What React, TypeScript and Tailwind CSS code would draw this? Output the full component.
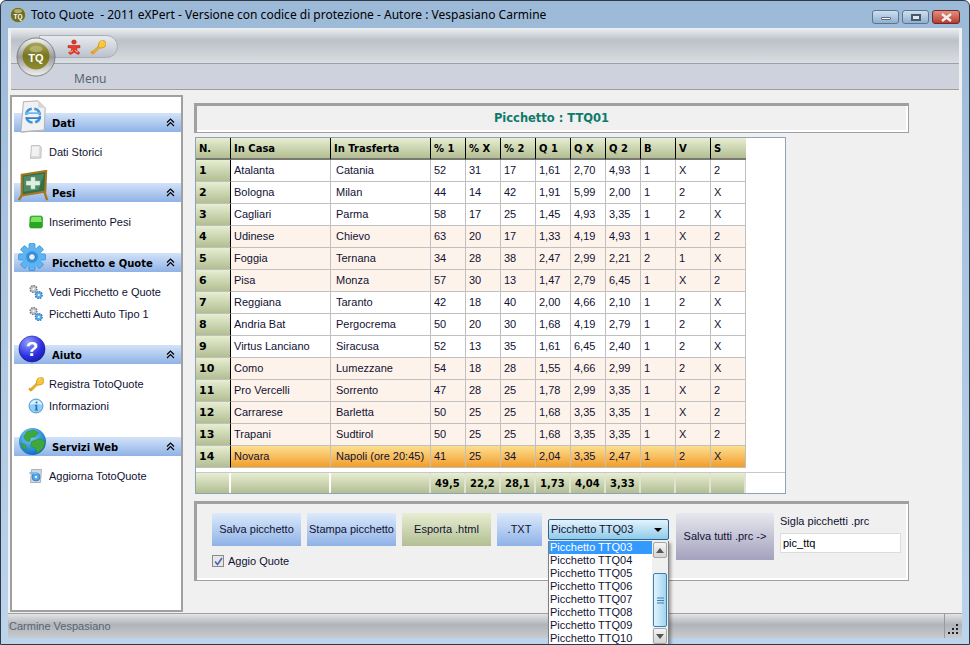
import React from "react";

const BODY = "font-['Liberation_Sans',sans-serif]";
const WIDE = "font-['DejaVu_Sans',sans-serif]";

type Row = string[];

const rows: Row[] = [
  ["1", "Atalanta", "Catania", "52", "31", "17", "1,61", "2,70", "4,93", "1", "X", "2"],
  ["2", "Bologna", "Milan", "44", "14", "42", "1,91", "5,99", "2,00", "1", "2", "X"],
  ["3", "Cagliari", "Parma", "58", "17", "25", "1,45", "4,93", "3,35", "1", "2", "X"],
  ["4", "Udinese", "Chievo", "63", "20", "17", "1,33", "4,19", "4,93", "1", "X", "2"],
  ["5", "Foggia", "Ternana", "34", "28", "38", "2,47", "2,99", "2,21", "2", "1", "X"],
  ["6", "Pisa", "Monza", "57", "30", "13", "1,47", "2,79", "6,45", "1", "X", "2"],
  ["7", "Reggiana", "Taranto", "42", "18", "40", "2,00", "4,66", "2,10", "1", "2", "X"],
  ["8", "Andria Bat", "Pergocrema", "50", "20", "30", "1,68", "4,19", "2,79", "1", "2", "X"],
  ["9", "Virtus Lanciano", "Siracusa", "52", "13", "35", "1,61", "6,45", "2,40", "1", "2", "X"],
  ["10", "Como", "Lumezzane", "54", "18", "28", "1,55", "4,66", "2,99", "1", "2", "X"],
  ["11", "Pro Vercelli", "Sorrento", "47", "28", "25", "1,78", "2,99", "3,35", "1", "X", "2"],
  ["12", "Carrarese", "Barletta", "50", "25", "25", "1,68", "3,35", "3,35", "1", "X", "2"],
  ["13", "Trapani", "Sudtirol", "50", "25", "25", "1,68", "3,35", "3,35", "1", "X", "2"],
  ["14", "Novara", "Napoli (ore 20:45)", "41", "25", "34", "2,04", "3,35", "2,47", "1", "2", "X"],
];

const headers = ["N.", "In Casa", "In Trasferta", "% 1", "% X", "% 2", "Q 1", "Q X", "Q 2", "B", "V", "S"];
const totals = ["", "", "", "49,5", "22,2", "28,1", "1,73", "4,04", "3,33", "", "", ""];
const peach = [4, 5, 6, 10, 11, 12, 13];
const options = ["03", "04", "05", "06", "07", "08", "09", "10"];

const GRID = "grid grid-cols-[35px_100px_100px_repeat(9,35px)]";
const GREEN = "bg-gradient-to-b from-[#e8eed2] to-[#b2be92]";
const BLUE_BTN = "bg-gradient-to-b from-[#dceafb] to-[#8fb2e6]";

function LogoBig() {
  return (
    <svg width={40} height={40} viewBox="0 0 40 40">
      <defs>
        <linearGradient id="ring" x1="0" y1="0" x2="0" y2="1">
          <stop offset="0" stopColor="#f4f4f4" />
          <stop offset="0.5" stopColor="#9a9a9a" />
          <stop offset="1" stopColor="#f2f2f2" />
        </linearGradient>
        <linearGradient id="olive" x1="0" y1="0" x2="0" y2="1">
          <stop offset="0" stopColor="#a9a75a" />
          <stop offset="0.5" stopColor="#77751f" />
          <stop offset="1" stopColor="#8f8c2f" />
        </linearGradient>
      </defs>
      <circle cx="20" cy="20" r="19" fill="url(#ring)" stroke="#6c6c6c" strokeWidth="0.8" />
      <circle cx="20" cy="19" r="13.500" fill="url(#olive)" />
      <ellipse cx="20" cy="12" rx="6.500" ry="3.200" fill="#c9c88f" opacity="0.6" />
      <text x="20" y="25" textAnchor="middle" fontSize="11" fontWeight="700" fill="#fff" fontFamily="'Liberation Sans', sans-serif">
        TQ
      </text>
    </svg>
  );
}

function LogoSmall() {
  return (
    <svg width={16} height={16} viewBox="0 0 16 16">
      <circle cx="8" cy="8" r="7.600" fill="#6f6d22" stroke="#c8c8a8" strokeWidth="0.600" />
      <ellipse cx="8" cy="4" rx="4" ry="2" fill="#b0ae70" />
      <text x="8" y="11.500" textAnchor="middle" fontSize="6.500" fontWeight="700" fill="#fff" fontFamily="'Liberation Sans', sans-serif">
        TQ
      </text>
    </svg>
  );
}

function KeyIcon() {
  return (
    <svg width={16} height={16} viewBox="0 0 16 16">
      <path d="M1.500 13.500L9 6.500l1.500 1.500-7 7z" fill="#f0b020" stroke="#c08410" strokeWidth="0.500" />
      <path d="M1.500 11.500l2.500 2.500-1.500 1.500-2-2z" fill="#e49c18" />
      <path d="M8.500 5a4 3.500-40 1 1 3 4l-1.500.3L8.300 7.500z" fill="#f7c63c" stroke="#c08410" strokeWidth="0.600" />
      <path d="M10.500 3.500l2-1" stroke="#fde9a0" strokeWidth="1" />
    </svg>
  );
}

function Runner() {
  return (
    <svg width={16} height={16} viewBox="0 0 16 16">
      <rect x="5.800" y="1" width="4.400" height="4" rx="1.800" fill="#e53327" stroke="#a81a12" strokeWidth="0.500" />
      <path d="M2 6.500h12v2.200l-3.200.3v2l3 3-1.500 1.500-4-2.200-4 2.200-1.800-1.500 3-3v-2L2 8.700z" fill="#ec3b2e" stroke="#a81a12" strokeWidth="0.500" />
      <path d="M4 13l3-1.500M9 11.500l3 1.500" stroke="#f7b8a0" strokeWidth="1" />
    </svg>
  );
}

function PageSmall() {
  return (
    <svg width={16} height={16} viewBox="0 0 16 16">
      <path d="M3.500 1.500h8l1.800 2-.4 10.500-10.400.5z" fill="#dcdcdc" stroke="#b8b8b8" strokeWidth="0.800" />
      <path d="M4 2.500h7l-.3 9.500H3.500z" fill="#f2f2f2" />
    </svg>
  );
}

function GreenBlock() {
  return (
    <svg width={16} height={16} viewBox="0 0 16 16">
      <path d="M2 4.500a2 2 0 0 1 2-2.500h8.500a2 2 0 0 1 2 2v8.500a2 2 0 0 1-2 1.500H3.500a2 2 0 0 1-2-2z" fill="#28a821" stroke="#2a8a22" strokeWidth="0.600" />
      <path d="M3.500 2.800h9.500l.8 5.200H2.500z" fill="#7ce35f" />
    </svg>
  );
}

function Gears() {
  return (
    <svg width={16} height={16} viewBox="0 0 16 16">
      <circle cx="5.500" cy="5" r="3.400" fill="#c2c6cc" stroke="#777" strokeWidth="1.400" strokeDasharray="1.600 1" />
      <circle cx="5.500" cy="5" r="1" fill="#fff" />
      <circle cx="10.800" cy="11" r="3.400" fill="#63b0ea" stroke="#2b7cc4" strokeWidth="1.400" strokeDasharray="1.600 1" />
      <circle cx="10.800" cy="11" r="1" fill="#fff" />
    </svg>
  );
}

function InfoIcon() {
  return (
    <svg width={16} height={16} viewBox="0 0 16 16">
      <circle cx="8" cy="8" r="7" fill="#8fcdf5" stroke="#3e8cc9" strokeWidth="0.800" />
      <path d="M2 7a6 5 0 0 1 12 0c-3-1.500-9-1.500-12 0z" fill="#d8effc" />
      <circle cx="8.500" cy="4.500" r="1" fill="#1f6fb0" />
      <path d="M7 7h2.200v4.500H10v1H6.800v-1h.8V8H7z" fill="#1f6fb0" />
    </svg>
  );
}

function UpdateIcon() {
  return (
    <svg width={16} height={16} viewBox="0 0 16 16">
      <path d="M3.500 1.500h10l-1 13h-10z" fill="#cfd8e2" stroke="#8f9aa6" strokeWidth="0.700" />
      <circle cx="8" cy="9" r="4" fill="#55a5e6" stroke="#2773b6" strokeWidth="0.700" />
      <path d="M1.500 4h8v2h-8z" fill="#7fbcec" />
      <circle cx="8" cy="9" r="1.200" fill="#e8f4fd" />
    </svg>
  );
}

function DocBig() {
  return (
    <svg width={30} height={33} viewBox="0 0 34 38">
      <path d="M6 2l17-1 8 8-1 26-27 2z" fill="#f1f1f3" stroke="#a8a8ae" strokeWidth="1" />
      <path d="M23 1l0 8 8 0z" fill="#d4d4da" />
      <path d="M3 36l27-2 1 1.500-27 2z" fill="#b8b8bc" />
      <circle cx="17" cy="18" r="8" fill="none" stroke="#3f95dc" strokeWidth="3" strokeDasharray="10 3" />
      <path d="M8 15h17" stroke="#72b7ea" strokeWidth="2" />
      <path d="M9 21h17" stroke="#2f80c8" strokeWidth="2" />
    </svg>
  );
}

function BoardBig() {
  return (
    <svg width={32} height={32} viewBox="0 0 34 34">
      <path d="M5 5l26-4-1 22-25 4z" fill="#2f6f4a" stroke="#a9761c" strokeWidth="2.200" />
      <path d="M7 7l22-3-6 17-16 2z" fill="#5c9470" opacity="0.700" />
      <path d="M15 8h4v4h5v4h-5v4h-4v-4h-5v-4h5z" fill="#dcefe0" stroke="#f5f5f5" strokeWidth="0.600" />
      <path d="M5 27l-3 5M29 23l3 9" stroke="#a9761c" strokeWidth="2.500" />
    </svg>
  );
}

function GearBig() {
  const teeth = [0, 45, 90, 135, 180, 225, 270, 315];
  return (
    <svg width={28} height={28} viewBox="0 0 28 28">
      {teeth.map((a) => (
        <rect key={a} x="11" y="0.500" width="6" height="6" rx="1" fill="#5cb4f2" stroke="#2a80cc" strokeWidth="0.600" transform={`rotate(${a} 14 14)`} />
      ))}
      <circle cx="14" cy="14" r="10" fill="#5cb4f2" />
      <circle cx="14" cy="14" r="6" fill="#3a94dc" />
      <circle cx="14" cy="14" r="3.400" fill="#e3f2fd" stroke="#1f6eb5" strokeWidth="1" />
    </svg>
  );
}

function HelpBig() {
  return (
    <svg width={28} height={28} viewBox="0 0 30 30">
      <defs>
        <radialGradient id="helpBall" cx="0.35" cy="0.25" r="0.900">
          <stop offset="0" stopColor="#8f9cff" />
          <stop offset="0.600" stopColor="#2a2fe0" />
          <stop offset="1" stopColor="#15159a" />
        </radialGradient>
      </defs>
      <circle cx="15" cy="15" r="14" fill="url(#helpBall)" stroke="#1a1a8c" strokeWidth="0.600" />
      <text x="15" y="23" textAnchor="middle" fontSize="22" fontWeight="700" fill="#fff" fontFamily="'Liberation Sans', sans-serif">
        ?
      </text>
    </svg>
  );
}

function GlobeBig() {
  return (
    <svg width={29} height={29} viewBox="0 0 30 30">
      <defs>
        <radialGradient id="globeBall" cx="0.400" cy="0.300" r="0.850">
          <stop offset="0" stopColor="#7fd0f5" />
          <stop offset="0.700" stopColor="#1c7fd0" />
          <stop offset="1" stopColor="#0d4f9e" />
        </radialGradient>
      </defs>
      <circle cx="15" cy="15" r="14" fill="url(#globeBall)" />
      <path d="M9 5l7-2 5 3-3 4-5 1-1 4-4-1-2-4zM14 15l9-3 5 3-2 7-6 5-2-5-5-2zM3 17l5 2 1 4-3 0z" fill="#3ea83a" stroke="#2c8a2a" strokeWidth="0.500" />
    </svg>
  );
}

function SidebarGroup({
  title,
  icon,
  iconClass,
  items,
}: {
  title: string;
  icon: React.ReactNode;
  iconClass: string;
  items: { label: string; icon: React.ReactNode }[];
}) {
  return (
    <div className="pb-5">
      <div className="relative flex h-[19px] items-center justify-between bg-gradient-to-b from-[#d3e3f8] to-[#8fb2e6] pl-[38px] pr-[6px]">
        <div className={`absolute ${iconClass}`}>{icon}</div>
        <span className={`${WIDE} pt-[1px] text-[10px] font-bold text-black`}>{title}</span>
        <svg width={9} height={9} viewBox="0 0 9 9" fill="none" stroke="#000" strokeWidth="1.200">
          <path d="M1 4.500l3.500-3.500 3.500 3.500M1 8l3.500-3.500 3.500 3.500" />
        </svg>
      </div>
      <div className="pt-[9px]">
        {items.map((item) => (
          <div key={item.label} className="flex h-[22px] items-center gap-[5px] pl-[14px] text-[11px] text-[#111133]">
            {item.icon}
            <span>{item.label}</span>
          </div>
        ))}
      </div>
    </div>
  );
}

function ArrowBtn({ up }: { up: boolean }) {
  return (
    <div className="flex h-[16px] shrink-0 items-center justify-center rounded-[2px] border border-[#a5a5a5] bg-gradient-to-b from-[#f4f4f4] to-[#d4d4d4]">
      <svg width={8} height={5} viewBox="0 0 8 5">
        <path d={up ? "M0 5l4-5 4 5z" : "M0 0l4 5 4-5z"} fill="#555" />
      </svg>
    </div>
  );
}

export default function App() {
  return (
    <div className={`${BODY} relative flex h-[645px] w-[970px] flex-col overflow-hidden rounded-t-[6px] border border-[#2f3a44] bg-gradient-to-b from-[#9cbad8] to-[#bcd4ec] text-[11px]`}>
      {/* barra del titolo */}
      <div className="flex h-[27px] shrink-0 items-center pl-[9px]">
        <LogoSmall />
        <span className="ml-[5px] whitespace-pre font-['Noto_Sans',sans-serif] text-[12px] text-black">
          Toto Quote  - 2011 eXPert - Versione con codice di protezione - Autore : Vespasiano Carmine
        </span>
        <div className="mr-[9px] ml-auto flex items-start gap-[3px] self-start pt-[9px]">
          <div className="flex h-[14px] w-[27px] items-center justify-center rounded-[3px] border border-[#5d7690] bg-gradient-to-b from-[#cfe0f0] to-[#8fb0d0]">
            <div className="mt-[3px] h-[3px] w-[10px] rounded-[1px] border border-[#5a6a7a] bg-white" />
          </div>
          <div className="flex h-[14px] w-[27px] items-center justify-center rounded-[3px] border border-[#5d7690] bg-gradient-to-b from-[#cfe0f0] to-[#8fb0d0]">
            <div className="h-[7px] w-[10px] border-2 border-[#4b5a6a] bg-[#dfe7ef]" />
          </div>
          <div className="flex h-[14px] w-[28px] items-center justify-center rounded-[3px] border border-[#6e2a2a] bg-gradient-to-b from-[#e09080] to-[#b8392c]">
            <svg width={11} height={9} viewBox="0 0 11 9">
              <path d="M1 1l9 7M10 1l-9 7" stroke="#f4f0f0" strokeWidth="2.400" />
            </svg>
          </div>
        </div>
      </div>

      {/* area client */}
      <div className="mx-[7px] flex min-h-0 flex-1 flex-col bg-[#f0f0f0] px-[3px]">
        <div className="relative h-[62px] shrink-0">
          <div className="h-[35px] bg-gradient-to-b from-[#eef0f1] via-[#bcc2c9] via-[35%] to-[#dadde1] pt-[7px]">
            <div className="ml-[28px] flex h-[23px] w-[79px] items-center gap-[8px] rounded-r-[12px] border border-[#a8aeb8] bg-gradient-to-b from-[#e8eaee] to-[#bcc2cc] pl-[26px]">
              <Runner />
              <KeyIcon />
            </div>
          </div>
          <div className="flex h-[27px] items-center border-y border-t-[#9aa2b0] border-b-[#a89a96] bg-[#ced2dc] pl-[63px] pt-[5px] font-['Noto_Sans',sans-serif] text-[12px] text-[#5a6472]">
            Menu
          </div>
          <div className="absolute left-[5px] top-[9px]">
            <LogoBig />
          </div>
        </div>

        <div className="mt-[5px] -ml-[1px] flex min-h-0 flex-1 gap-[11px]">
          {/* pannello laterale */}
          <div className="h-[517px] w-[173px] shrink-0 border-2 border-[#a0a0a0] bg-white pl-[2px] pt-[16px]">
            <SidebarGroup title="Dati" icon={<DocBig />} iconClass="left-[4px] -top-[13px]" items={[{ label: "Dati Storici", icon: <PageSmall /> }]} />
            <SidebarGroup title="Pesi" icon={<BoardBig />} iconClass="left-[3px] -top-[13px]" items={[{ label: "Inserimento Pesi", icon: <GreenBlock /> }]} />
            <SidebarGroup
              title="Picchetto e Quote"
              icon={<GearBig />}
              iconClass="left-[4px] -top-[10px]"
              items={[
                { label: "Vedi Picchetto e Quote", icon: <Gears /> },
                { label: "Picchetti Auto Tipo 1", icon: <Gears /> },
              ]}
            />
            <SidebarGroup
              title="Aiuto"
              icon={<HelpBig />}
              iconClass="left-[4px] -top-[10px]"
              items={[
                { label: "Registra TotoQuote", icon: <KeyIcon /> },
                { label: "Informazioni", icon: <InfoIcon /> },
              ]}
            />
            <SidebarGroup title="Servizi Web" icon={<GlobeBig />} iconClass="left-[4px] -top-[10px]" items={[{ label: "Aggiorna TotoQuote", icon: <UpdateIcon /> }]} />
          </div>

          {/* contenuto */}
          <div className="flex w-[715px] flex-col pt-[8px]">
            <div className={`${WIDE} flex h-[30px] w-[715px] shrink-0 items-center justify-center border border-[#a0a0a0] bg-[#f0f0f0] pt-[1px] text-[11.5px] font-bold text-[#0e7a6a] shadow-[inset_2px_2px_0_#a0a0a0,inset_-2px_-2px_0_#fff]`}>
              Picchetto : TTQ01
            </div>

            <div className="mt-[4px] ml-[1px] h-[357px] w-[591px] shrink-0 self-start border border-[#8fa3b8] bg-white">
              <div className={GRID}>
                {headers.map((h, i) => (
                  <div
                    key={h}
                    className={`${GREEN} ${WIDE} flex h-[22px] items-center border-b-2 border-b-[#7a7a72] pl-[3px] text-[10px] font-bold text-black ${i < 11 ? "border-r border-r-black" : ""}`}
                  >
                    {h}
                  </div>
                ))}
              </div>
              {rows.map((r, idx) => {
                const n = idx + 1;
                const bg = n === 14 ? "bg-gradient-to-b from-[#fcdf8e] to-[#f19d20]" : peach.includes(n) ? "bg-[#fdf3ea]" : "bg-white";
                return (
                  <div key={n} className={GRID}>
                    {r.map((c, i) =>
                      i === 0 ? (
                        <div key={i} className={`${GREEN} ${WIDE} flex h-[22px] items-center border-r border-b border-r-black border-b-[#c0c0c0] pl-[3px] pt-[1px] text-[11px] font-bold text-black`}>
                          {c}
                        </div>
                      ) : (
                        <div key={i} className={`${bg} flex h-[22px] items-center border-r border-b border-[#c0c0c0] text-[11px] text-[#111133] ${i === 2 ? "pl-[5px]" : "pl-[3px]"}`}>
                          {c}
                        </div>
                      ),
                    )}
                  </div>
                );
              })}
              <div className={`${GRID} mt-[4px] border-t border-t-[#c8c8c8]`}>
                {totals.map((c, i) => (
                  <div
                    key={i}
                    className={`${GREEN} ${WIDE} flex h-[20px] items-center border-r-2 pl-[4px] text-[10px] font-bold text-black ${i < 2 ? "border-r-white" : "border-r-[#dfe3d0]"}`}
                  >
                    {c}
                  </div>
                ))}
              </div>
            </div>

            {/* pannello comandi */}
            <div className="mt-[7px] flex h-[80px] w-[715px] shrink-0 border border-[#a0a0a0] bg-[#f0f0f0] pt-[11px] pl-[17px] shadow-[inset_2px_2px_0_#a0a0a0,inset_-2px_-2px_0_#fff]">
              <div className="flex flex-col">
                <div className="flex gap-[6px] text-[11px] text-[#111133]">
                  <button className={`${BLUE_BTN} h-[33px] w-[89px] whitespace-nowrap`}>Salva picchetto</button>
                  <button className={`${BLUE_BTN} h-[33px] w-[89px] whitespace-nowrap`}>Stampa picchetto</button>
                  <button className="h-[33px] w-[89px] whitespace-nowrap bg-gradient-to-b from-[#e8eed2] to-[#b2be92]">Esporta .html</button>
                  <button className={`${BLUE_BTN} h-[33px] w-[45px]`}>.TXT</button>
                </div>
                <label className="mt-[9px] flex h-[12px] items-center gap-[4px] text-[11px] text-[#111133]">
                  <span className="flex h-[12px] w-[12px] items-center justify-center border border-[#8a8a8a] bg-[#e6e6ea]">
                    <svg width={9} height={9} viewBox="0 0 9 9">
                      <path d="M1 4.500l2.500 3L8 1" fill="none" stroke="#4a62b0" strokeWidth="1.600" />
                    </svg>
                  </span>
                  Aggio Quote
                </label>
              </div>

              <div className="relative mt-[6px] ml-[6px] h-[21px] w-[121px]">
                <div className="flex h-[21px] items-center justify-between rounded-[2px] border border-[#2c628b] bg-gradient-to-b from-[#e4f3fc] to-[#8ecbe9] pr-[6px] pl-[2px] text-[11px] text-[#111133]">
                  Picchetto TTQ03
                  <svg width={8} height={4} viewBox="0 0 8 4">
                    <path d="M0 0h8L4 4z" fill="#000" />
                  </svg>
                </div>
                {/* lista aperta */}
                <div className="absolute top-[22px] left-0 z-10 flex h-[105px] w-[121px] border-x border-b border-[#7f7f7f] bg-white shadow-[2px_2px_3px_rgba(0,0,0,0.35)]">
                  <div className="flex-1 text-[11px] leading-[13px] text-[#111133]">
                    {options.map((o, i) => (
                      <div key={o} className={`h-[13px] pl-[1px] ${i === 0 ? "bg-[#3399ff] text-white" : ""}`}>
                        Picchetto TTQ{o}
                      </div>
                    ))}
                  </div>
                  <div className="flex w-[16px] flex-col bg-[#f0f0f0] px-[1px] pt-[1px]">
                    <ArrowBtn up />
                    <div className="mt-[15px] flex h-[54px] shrink-0 items-center justify-center rounded-[2px] border border-[#3c7fb1] bg-gradient-to-r from-[#e3f4fc] to-[#9dd5f2]">
                      <svg width={7} height={7} viewBox="0 0 7 7">
                        <path d="M0 1h7M0 3.500h7M0 6h7" stroke="#4a7ea8" />
                      </svg>
                    </div>
                    <div className="mt-[1px]">
                      <ArrowBtn up={false} />
                    </div>
                  </div>
                </div>
              </div>

              <button className="ml-[7px] h-[47px] w-[98px] bg-gradient-to-b from-[#e8e8ef] to-[#a3a1bd] text-[11px] whitespace-nowrap text-[#111133]">
                Salva tutti .prc -&gt;
              </button>
              <div className="ml-[6px] flex flex-col">
                <span className="mb-[4px] h-[16px] text-[11px] text-[#111133]">Sigla picchetti .prc</span>
                <div className="flex h-[20px] w-[121px] items-center border border-[#dcdcdc] bg-white pl-[2px] text-[11px] text-black">pic_ttq</div>
              </div>
            </div>
          </div>
        </div>

        {/* barra di stato */}
        <div className="-mx-[3px] flex h-[25px] shrink-0 items-stretch border-t border-t-[#a0a0a0] bg-gradient-to-b from-[#e2e4e6] via-[#b0b4b9] via-[45%] to-[#c8cbcf] text-[11px] text-[#5a6472]">
          <span className="flex flex-1 items-center pl-[1px]">Carmine Vespasiano</span>
          <div className="flex w-[18px] items-end justify-end border-l border-l-[#9a9a9a] pr-[3px] pb-[3px]">
            <svg width={11} height={11} viewBox="0 0 11 11" fill="#222">
              <rect x="8" y="0" width="2" height="2" />
              <rect x="4" y="4" width="2" height="2" />
              <rect x="8" y="4" width="2" height="2" />
              <rect x="0" y="8" width="2" height="2" />
              <rect x="4" y="8" width="2" height="2" />
              <rect x="8" y="8" width="2" height="2" />
            </svg>
          </div>
        </div>
      </div>
      <div className="h-[6px] shrink-0" />
    </div>
  );
}
